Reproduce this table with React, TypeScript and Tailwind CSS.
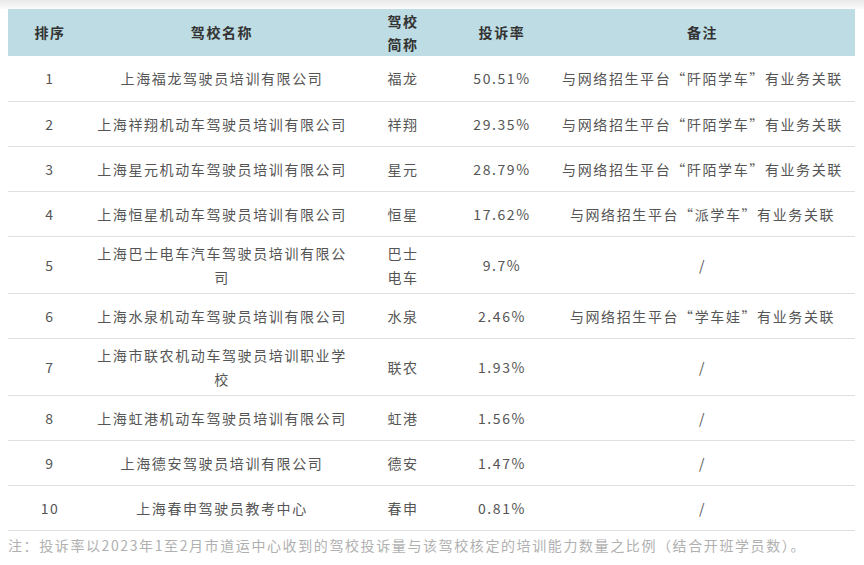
const rows = [
  { no: "1", name: "上海福龙驾驶员培训有限公司", short: "福龙", rate: "50.51%", note: "与网络招生平台“阡陌学车”有业务关联" },
  { no: "2", name: "上海祥翔机动车驾驶员培训有限公司", short: "祥翔", rate: "29.35%", note: "与网络招生平台“阡陌学车”有业务关联" },
  { no: "3", name: "上海星元机动车驾驶员培训有限公司", short: "星元", rate: "28.79%", note: "与网络招生平台“阡陌学车”有业务关联" },
  { no: "4", name: "上海恒星机动车驾驶员培训有限公司", short: "恒星", rate: "17.62%", note: "与网络招生平台“派学车”有业务关联" },
  { no: "5", name: "上海巴士电车汽车驾驶员培训有限公司", short: "巴士电车", rate: "9.7%", note: "/" },
  { no: "6", name: "上海水泉机动车驾驶员培训有限公司", short: "水泉", rate: "2.46%", note: "与网络招生平台“学车娃”有业务关联" },
  { no: "7", name: "上海市联农机动车驾驶员培训职业学校", short: "联农", rate: "1.93%", note: "/" },
  { no: "8", name: "上海虹港机动车驾驶员培训有限公司", short: "虹港", rate: "1.56%", note: "/" },
  { no: "9", name: "上海德安驾驶员培训有限公司", short: "德安", rate: "1.47%", note: "/" },
  { no: "10", name: "上海春申驾驶员教考中心", short: "春申", rate: "0.81%", note: "/" },
];

export default function App() {
  return (
    <div
      className="w-[864px] h-[565px] bg-white overflow-hidden tracking-[1.6px]"
      style={{ fontFamily: '"Noto Sans CJK SC", "Noto Sans", sans-serif' }}
    >
      <div className="h-[9px] bg-gradient-to-b from-[#e9e9e9] to-[#fbfbfb]" />
      <div className="pl-[8px] w-[855px]">
        <table className="w-[847px] table-fixed border-collapse text-[14px]">
          <colgroup>
            <col className="w-[84px]" />
            <col className="w-[260px]" />
            <col className="w-[102px]" />
            <col className="w-[96px]" />
            <col className="w-[305px]" />
          </colgroup>
          <thead>
            <tr className="h-[47px] bg-[#bddce3] text-[#333] font-bold leading-[23px]">
              <th className="p-0 font-bold">排序</th>
              <th className="p-0 font-bold">驾校名称</th>
              <th className="p-0 font-bold">
                <div className="mx-auto w-[35px]">驾校简称</div>
              </th>
              <th className="p-0 font-bold">投诉率</th>
              <th className="p-0 font-bold">备注</th>
            </tr>
          </thead>
          <tbody className="text-[#555] leading-[24px]">
            {rows.map((r) => (
              <tr key={r.no} className="h-[45px] border-b border-[#dfdfdf] text-center">
                <td className="py-[4px]">{r.no}</td>
                <td className="py-[4px]">
                  <div className="mx-auto w-[256px]">{r.name}</div>
                </td>
                <td className="py-[4px]">
                  <div className="mx-auto w-[35px]">{r.short}</div>
                </td>
                <td className="py-[4px]">{r.rate}</td>
                <td className="py-[4px] whitespace-nowrap">{r.note}</td>
              </tr>
            ))}
          </tbody>
        </table>
        <p className="mt-[2px] text-[14px] leading-[24px] text-[#b0b0b0] whitespace-nowrap">
          注：投诉率以2023年1至2月市道运中心收到的驾校投诉量与该驾校核定的培训能力数量之比例（结合开班学员数）。
        </p>
      </div>
    </div>
  );
}
